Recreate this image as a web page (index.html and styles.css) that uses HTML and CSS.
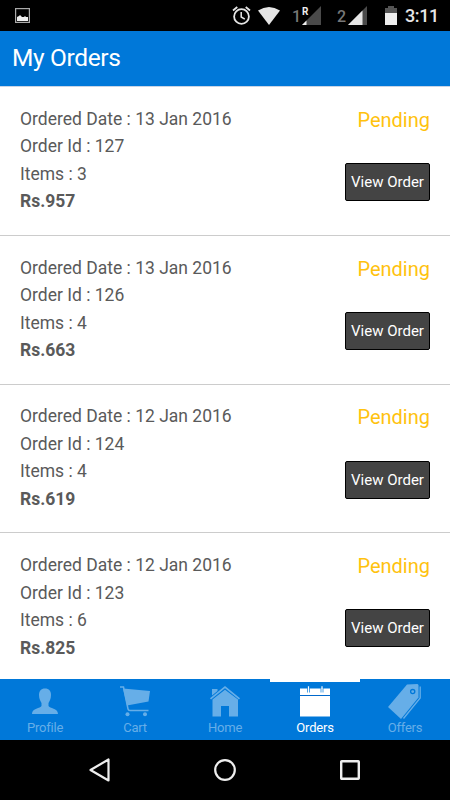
FILE: index.html
```html
<!DOCTYPE html>
<html lang="en">
<head>
<meta charset="utf-8">
<title>My Orders</title>
<link rel="stylesheet" href="styles.css">
</head>
<body>
<div class="screen">
  <div class="status">
    <svg class="shot" width="15" height="15" viewBox="0 0 15 15"><rect x=".6" y=".6" width="13.8" height="13.8" fill="none" stroke="#aaa" stroke-width="1.2"/><path d="M2 13V9l2-1 1-1 2 2h2l1-1 1 1h2v4z" fill="#eee"/></svg>
    <svg class="alarm" width="19" height="19" viewBox="0 0 19 19" fill="none" stroke="#e6e6e6"><circle cx="9.500" cy="10.500" r="7.400" stroke-width="1.800"/><path d="M9.200 6v5l3.600 2.200" stroke-width="1.500"/><path d="M1 4.500L5.300 1M18 4.500L13.700 1" stroke-width="1.800"/></svg>
    <svg class="wifi" width="22" height="18" viewBox="0 0 22 18"><path d="M0 3.600Q11-3.500 22 3.600L11 18z" fill="#e6e6e6"/></svg>
    <span class="sim sim1">1</span>
    <svg class="cell" width="19" height="19" viewBox="0 0 19 19"><path d="M19 0v19H0z" fill="#4a4a4a"/><path d="M4.500 14.500V19H0z" fill="#eee"/></svg>
    <span class="roam">R</span>
    <span class="sim sim2">2</span>
    <svg class="cell" width="19" height="19" viewBox="0 0 19 19"><path d="M19 0v19H0z" fill="#4a4a4a"/><path d="M14.500 4.500V19H0z" fill="#e6e6e6"/></svg>
    <svg class="battery" width="12" height="19" viewBox="0 0 12 19"><path d="M0 2h3V0h6v2h3v5H0z" fill="#555"/><path d="M0 7h12v12H0z" fill="#eee"/></svg>
    <span class="clock">3:11</span>
  </div>
  <header class="bar"><h1>My Orders</h1></header>
  <main class="orders">
    <section class="order">
      <div class="info"><p>Ordered Date : 13 Jan 2016</p><p>Order Id : 127</p><p>Items : 3</p><p class="price">Rs.957</p></div>
      <div class="side"><span class="state">Pending</span><button class="view">View Order</button></div>
    </section>
    <section class="order">
      <div class="info"><p>Ordered Date : 13 Jan 2016</p><p>Order Id : 126</p><p>Items : 4</p><p class="price">Rs.663</p></div>
      <div class="side"><span class="state">Pending</span><button class="view">View Order</button></div>
    </section>
    <section class="order">
      <div class="info"><p>Ordered Date : 12 Jan 2016</p><p>Order Id : 124</p><p>Items : 4</p><p class="price">Rs.619</p></div>
      <div class="side"><span class="state">Pending</span><button class="view">View Order</button></div>
    </section>
    <section class="order">
      <div class="info"><p>Ordered Date : 12 Jan 2016</p><p>Order Id : 123</p><p>Items : 6</p><p class="price">Rs.825</p></div>
      <div class="side"><span class="state">Pending</span><button class="view">View Order</button></div>
    </section>
  </main>
  <nav class="tabs">
    <div class="tab">
      <svg width="40" height="38" viewBox="0 0 40 38"><path d="M20 8.500c4 0 6 2.500 6 6.500 0 4-1.500 6-2.500 8v3c1 2.500 9.500 2 9.500 8H7c0-6 8.500-5.500 9.500-8v-3c-1-2-2.500-4-2.500-8C14 11 16 8.500 20 8.500z" fill="currentColor"/></svg>
      <span>Profile</span>
    </div>
    <div class="tab">
      <svg width="40" height="38" viewBox="0 0 40 38"><path d="M8 8.500l27 2.500-1.500 10.500L12 25.500z" fill="currentColor"/><path d="M5 7h3.500L13 29q.3 1.500 2 1.500h18.500" fill="none" stroke="currentColor" stroke-width="1.500"/><circle cx="12.500" cy="34.300" r="2" fill="currentColor"/><circle cx="30" cy="34.300" r="2" fill="currentColor"/></svg>
      <span>Cart</span>
    </div>
    <div class="tab">
      <svg width="40" height="38" viewBox="0 0 40 38"><path d="M5.500 18.800L20 7.200l14.500 11.600" fill="none" stroke="currentColor" stroke-width="1.700"/><path d="M7 9h5.500v2L7 15.500zM7.500 19.500L20 9.700l13 9.800v17h-9V26h-8v10.500H7.500z" fill="currentColor"/></svg>
      <span>Home</span>
    </div>
    <div class="tab active">
      <svg width="40" height="38" viewBox="0 0 40 38"><path d="M5 8.500h30v28H5z" fill="#fff"/><path d="M5 15.500h30" stroke="#0068cc" stroke-width="1"/><path d="M12.500 8v4.500M14.500 8v4.500M26 8v4.500M28 8v4.500" stroke="#0078d9" stroke-width=".7"/><path d="M13.500 6.300V9M27 6.300V9" stroke="#fff" stroke-width="1.200"/></svg>
      <span>Orders</span>
    </div>
    <div class="tab">
      <svg width="40" height="38" viewBox="0 0 40 38"><path d="M22 4.500L32.500 4l1 1v12.500L16 39 3 27z" fill="currentColor"/><path d="M35.200 6.500V18L18.500 38.500" fill="none" stroke="currentColor" stroke-width="1.300"/><circle cx="27.700" cy="11.600" r="2.100" fill="none" stroke="#0078d9" stroke-width="1.300"/></svg>
      <span>Offers</span>
    </div>
  </nav>
  <div class="system">
    <svg width="24" height="26" viewBox="0 0 24 26"><path d="M20.500 2.500v21L2.500 13z" fill="none" stroke="#eee" stroke-width="2.200" stroke-linejoin="round"/></svg>
    <svg width="24" height="24" viewBox="0 0 24 24"><circle cx="12" cy="12" r="9.800" fill="none" stroke="#eee" stroke-width="2.200"/></svg>
    <svg width="24" height="24" viewBox="0 0 24 24"><rect x="3.200" y="3.200" width="17.600" height="17.600" rx=".5" fill="none" stroke="#eee" stroke-width="2.400"/></svg>
  </div>
</div>
</body>
</html>
```
FILE: styles.css
```css
* { box-sizing: border-box; }
body { margin: 0; font-family: Roboto, "Liberation Sans", sans-serif; background: #fff; }
.screen { width: 450px; height: 800px; display: flex; flex-direction: column; overflow: hidden; }
.status { height: 31px; flex: none; background: #000; display: flex; align-items: flex-start; position: relative; padding: 6px 0 0 15px; }
.status svg { display: block; flex: none; }
.shot { margin: 2px 202px 0 0; }
.alarm { margin-right: 7px; }
.wifi { margin: 1px 12px 0 0; }
.sim { font-size: 16px; line-height: 18px; font-weight: 500; color: #777; margin-top: 2px; width: 10px; }
.sim2 { margin: 2px 1px 0 16px; }
.roam { position: absolute; left: 302px; top: 7px; font-size: 10px; line-height: 10px; font-weight: 700; color: #eee; }
.battery { margin: 0 8px 0 18px; }
.clock { font-size: 18px; line-height: 20px; font-weight: 500; letter-spacing: -.4px; color: #e6e6e6; }
.bar { height: 56px; flex: none; background: #0078d9; border-bottom: 1px solid #c8d4e6; display: flex; align-items: center; padding: 0 0 1px 12px; }
h1 { margin: 0; font-size: 24.5px; font-weight: 400; line-height: 28px; letter-spacing: -.35px; color: #fff; }
.orders { height: 592px; flex: none; overflow: hidden; color: #5a5a5a; }
.order { height: 148.8px; padding: 18px 20px 0; border-bottom: 1px solid #ccc; display: flex; justify-content: space-between; }
.info { padding-top: .8px; }
.info p { margin: 0; font-size: 17.5px; line-height: 27.5px; white-space: nowrap; }
.info .price { font-weight: 700; }
.side { display: flex; flex-direction: column; align-items: flex-end; }
.state { padding-top: .8px; font-size: 20px; line-height: 28px; color: #ffc20e; }
.view { margin: 29.2px 0 0; width: 85px; height: 38px; padding: 0; border: 1px solid #000; border-radius: 2px; background: #444; color: #fff; font: 400 15px/20px Roboto, sans-serif; white-space: nowrap; }
.tabs { height: 61px; flex: none; display: flex; background: #0078d9; color: #66aee8; }
.tab { width: 90px; display: flex; flex-direction: column; align-items: center; font-size: 13px; line-height: 16px; letter-spacing: -.2px; }
.tab svg { display: block; margin-top: 1px; overflow: visible; }
.tab span { margin-top: 2px; }
.active { color: #fff; box-shadow: inset 0 3px #fff; }
.system { height: 60px; flex: none; background: #000; display: flex; align-items: center; justify-content: space-between; padding: 0 88px 0 88px; }
```
